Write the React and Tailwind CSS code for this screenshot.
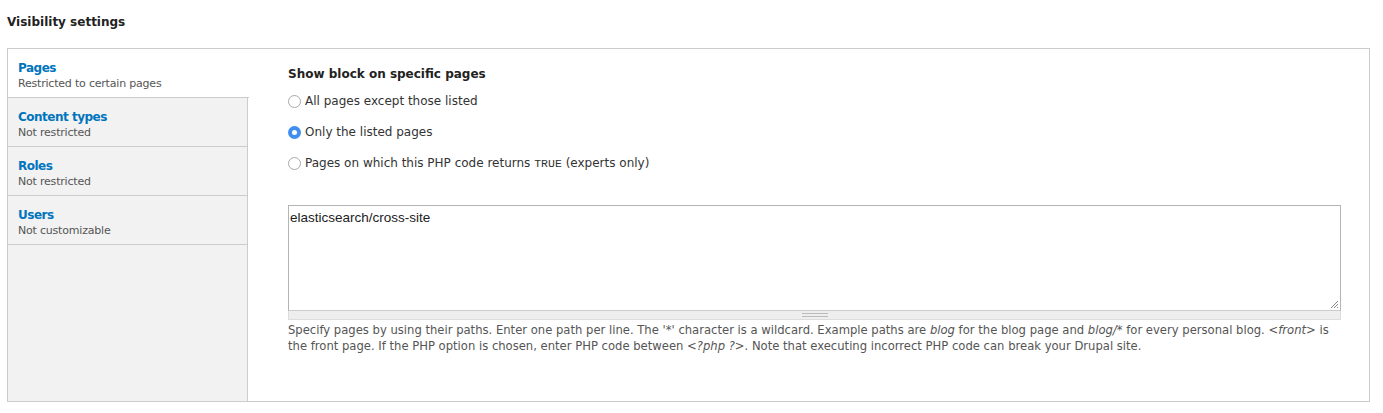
import { useState } from "react";

const tabs = [
  { title: "Pages", sub: "Restricted to certain pages" },
  { title: "Content types", sub: "Not restricted" },
  { title: "Roles", sub: "Not restricted" },
  { title: "Users", sub: "Not customizable" },
];

const options = [
  { id: "all", label: <>All pages except those listed</> },
  { id: "listed", label: <>Only the listed pages</> },
  {
    id: "php",
    label: (
      <>
        Pages on which this PHP code returns{" "}
        <code className="font-['Liberation_Mono',monospace] text-[11.5px]">TRUE</code> (experts only)
      </>
    ),
  },
];

function Radio({ checked, onClick, children }) {
  return (
    <label className="flex items-center gap-[4px] h-[16px] cursor-pointer" onClick={onClick}>
      {checked ? (
        <span className="w-[13px] h-[13px] rounded-full bg-[#3f8ef0] flex items-center justify-center shrink-0">
          <span className="w-[5px] h-[5px] rounded-full bg-white" />
        </span>
      ) : (
        <span className="w-[13px] h-[13px] rounded-full border border-[#a8a8a8] bg-white shrink-0" />
      )}
      <span className="text-[12px] text-[#333]">{children}</span>
    </label>
  );
}

export default function App() {
  const [active, setActive] = useState(0);
  const [mode, setMode] = useState("listed");

  return (
    <div className="w-[1383px] h-[413px] bg-white font-['DejaVu_Sans',sans-serif] text-[#333]">
      <h2 className="px-[7px] pt-[13px] h-[48px] text-[12px] font-bold text-[#222]">Visibility settings</h2>

      <div className="mx-[7px] w-[1363px] h-[354px] border border-[#ccc] flex">
        {/* vertical tabs */}
        <div className="w-[240px] shrink-0 bg-[#f2f2f2] flex flex-col">
          {tabs.map((t, i) => (
            <button
              key={t.title}
              type="button"
              onClick={() => setActive(i)}
              className={`h-[49px] text-left pl-[10px] pt-[5px] border-b border-[#ccc] ${
                active === i ? "bg-white w-[241px]" : "border-r"
              }`}
            >
              <div className="text-[12px] tracking-[-0.5px] font-bold text-[#0074bd] leading-[16px]">{t.title}</div>
              <div className="text-[11px] tracking-[-0.2px] text-[#555] leading-[16px]">{t.sub}</div>
            </button>
          ))}
          <div className="flex-1 border-r border-[#ccc]" />
        </div>

        {/* pane */}
        <div className="flex-1 pl-[40px] pt-[17px]">
          <div className="text-[12px] font-bold text-[#222] leading-[16px]">Show block on specific pages</div>
          <div className="flex flex-col gap-[15px] mt-[11px]">
            {options.map((o) => (
              <Radio key={o.id} checked={mode === o.id} onClick={() => setMode(o.id)}>
                {o.label}
              </Radio>
            ))}
          </div>

          <div className="mt-[34px] w-[1053px]">
            <div className="h-[106px] border border-[#b4b4b4] border-b-[#ccc] bg-white relative">
              <div className="px-[1px] pt-[2px] font-['Liberation_Sans',Arial,sans-serif] text-[13.5px] text-[#222]">
                elasticsearch/cross-site
              </div>
              <svg className="absolute right-[1px] bottom-[1px]" width="9" height="9" viewBox="0 0 9 9">
                <path d="M8 1 L1 8 M8 4 L4 8 M8 7 L7 8" stroke="#888" strokeWidth="1" />
              </svg>
            </div>
            <div className="h-[9px] bg-[#eee] border border-t-0 border-[#ddd] flex items-center justify-center">
              <div className="w-[26px] h-[4px] border-y border-[#bbb]" />
            </div>
          </div>

          <p className="mt-[2px] w-[1056px] text-[11.6px] leading-[16px] text-[#555]">
            Specify pages by using their paths. Enter one path per line. The '*' character is a wildcard. Example paths
            are <em>blog</em> for the blog page and <em>blog/*</em> for every personal blog. <em>&lt;front&gt;</em> is
            the front page. If the PHP option is chosen, enter PHP code between <em>&lt;?php ?&gt;</em>. Note that
            executing incorrect PHP code can break your Drupal site.
          </p>
        </div>
      </div>
    </div>
  );
}
